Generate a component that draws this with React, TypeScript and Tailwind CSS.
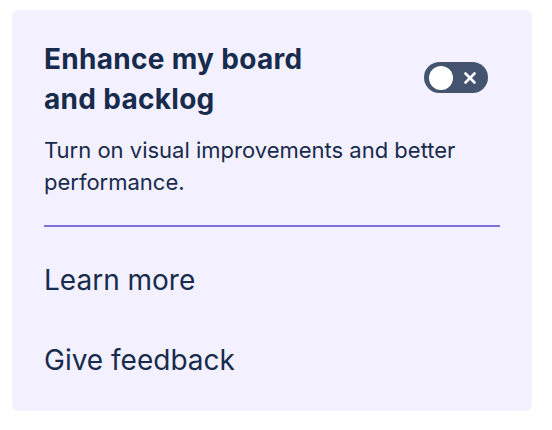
import React from "react";

export default function App() {
  return (
    <div className="w-[552px] h-[430px] bg-white pt-[10px] pl-[12px]" style={{ fontFamily: "Inter, 'Noto Sans', sans-serif" }}>
      <div className="w-[520px] h-[401px] bg-[#f3f0ff] rounded-[6px] pl-[32px] pr-[32px] pt-[29px] text-[#172b4d]">
        <div className="flex justify-between">
          <h2 className="text-[28px] leading-[40px] font-bold tracking-[0.3px] w-[300px]">Enhance my board and backlog</h2>
          <div className="mt-[23px] mr-[12px] w-[64px] h-[31px] rounded-full bg-[#44546f] flex items-center pl-[5px]">
            <div className="w-[24px] h-[24px] rounded-full bg-white" />
            <svg width="14" height="14" viewBox="0 0 14 14" className="ml-[10px]">
              <path d="M2.5 2.5 L11.5 11.5 M11.5 2.5 L2.5 11.5" stroke="white" strokeWidth="2.6" strokeLinecap="round" />
            </svg>
          </div>
        </div>
        <p className="mt-[15px] text-[22px] leading-[32px]">Turn on visual improvements and better performance.</p>
        <div className="mt-[27px] h-[2px] bg-[#8270db]" />
        <div className="mt-[13px] flex flex-col">
          <a className="py-[20px] text-[28px] leading-[40px]">Learn more</a>
          <a className="py-[20px] text-[28px] leading-[40px]">Give feedback</a>
        </div>
      </div>
    </div>
  );
}
